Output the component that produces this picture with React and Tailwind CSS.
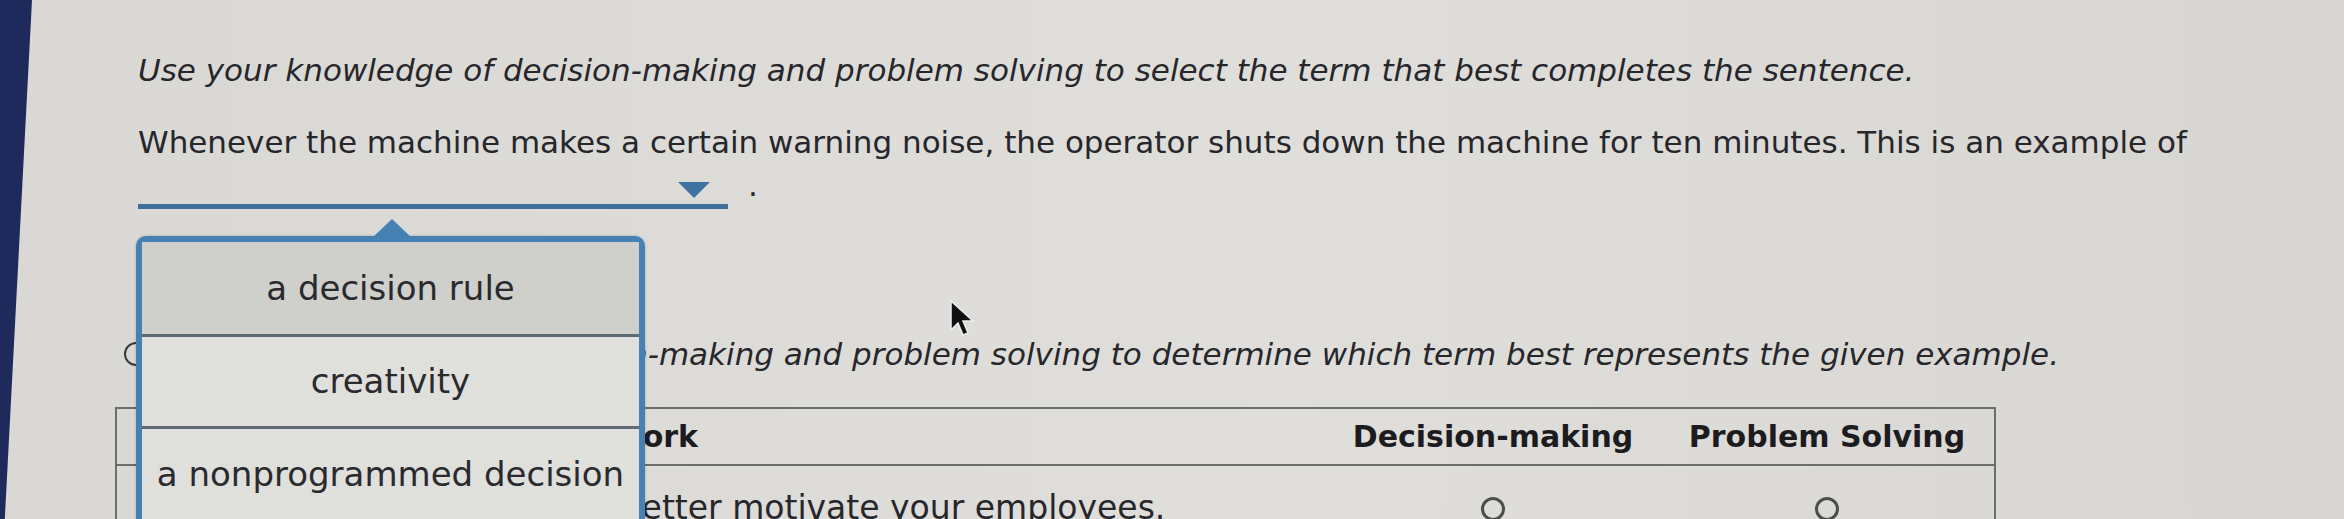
import React from "react";

const options = ["a decision rule", "creativity", "a nonprogrammed decision"];

function Radio() {
  return <span className="block h-[24px] w-[24px] rounded-full border-[3px] border-[#4d4d4d]" />;
}

export default function App() {
  return (
    <div className="flex h-[519px] w-[2344px] overflow-hidden bg-[linear-gradient(90deg,#d9d8d4_0%,#dfdedb_55%,#d8d6d2_100%)] font-['DejaVu_Sans',sans-serif] text-[#26262b]">
      <div className="w-[32px] shrink-0 bg-[#1f2a5c] [clip-path:polygon(0_0,100%_0,15%_100%,0_100%)]" />

      <div className="relative flex-1 pl-[106px] pt-[52px]">
        <p className="text-[31px] italic leading-[36px]">
          Use your knowledge of decision-making and problem solving to select the term that best completes the sentence.
        </p>

        <p className="mt-[36px] text-[31px] leading-[36px]">
          Whenever the machine makes a certain warning noise, the operator shuts down the machine for ten minutes. This is an example of
        </p>

        <div className="relative flex items-end">
          <div className="flex h-[49px] w-[590px] items-end justify-end border-b-[5px] border-[#3f6f9b] pb-[6px] pr-[18px]">
            <svg width="32" height="16" viewBox="0 0 32 16">
              <path d="M0 0 H32 L16 16 Z" fill="#3f72a0" />
            </svg>
          </div>
          <span className="ml-[20px] pb-[6px] text-[31px] leading-[36px]">.</span>

          <div className="absolute left-[-2px] top-[76px] z-10 w-[509px]">
            <svg className="absolute left-[236px] top-[-17px]" width="40" height="19" viewBox="0 0 40 19">
              <path d="M0 19 L20 0 L40 19 Z" fill="#4581b3" />
            </svg>
            <div className="rounded-t-[10px] border-[6px] border-b-0 border-[#4581b3] bg-[#dfdfdc] shadow-[0_0_3px_rgba(0,0,0,0.25)]">
              {options.map((o, i) => (
                <div
                  key={o}
                  className={
                    "flex h-[92px] items-center justify-center text-[34px] text-[#2a2a2e] " +
                    (i === 0 ? "bg-[#cfcfcc] " : "border-t-[3px] border-[#5d6a74] ") +
                    (i === 2 ? "h-[110px] pb-[16px]" : "")
                  }
                >
                  {o}
                </div>
              ))}
            </div>
          </div>
        </div>

        <div className="-ml-[14px] mt-[127px] flex items-center gap-[7px]">
          <span className="block h-[24px] w-[24px] shrink-0 rounded-full border-2 border-[#3a3a3a]" />
          <p className="text-[31px] italic leading-[36px]">
            Use your knowledge of decision-making and problem solving to determine which term best represents the given example.
          </p>
        </div>

        <div className="-ml-[23px] mt-[35px] w-[1881px] border-2 border-b-0 border-[#6d6d6d]">
          <div className="flex h-[57px] items-center border-b-2 border-[#6d6d6d] text-[30px] font-bold text-[#1c1c20]">
            <div className="flex-1 pl-[300px]">Example of work</div>
            <div className="w-[334px] text-center">Decision-making</div>
            <div className="w-[334px] text-center">Problem Solving</div>
          </div>
          <div className="flex h-[80px] items-start text-[33px]">
            <div className="flex-1 pl-[75px] pt-[23px] leading-[38px]">You need to find a way to better motivate your employees.</div>
            <div className="flex w-[334px] justify-center pt-[31px]"><Radio /></div>
            <div className="flex w-[334px] justify-center pt-[31px]"><Radio /></div>
          </div>
        </div>

        <svg className="absolute left-[917px] top-[300px] z-20" width="26" height="38" viewBox="0 0 26 38">
          <path d="M2 1 L2 30 L9 23 L14 35 L19 33 L14 21 L24 21 Z" fill="#111" stroke="#eee" strokeWidth="1.5" />
        </svg>
      </div>
    </div>
  );
}
